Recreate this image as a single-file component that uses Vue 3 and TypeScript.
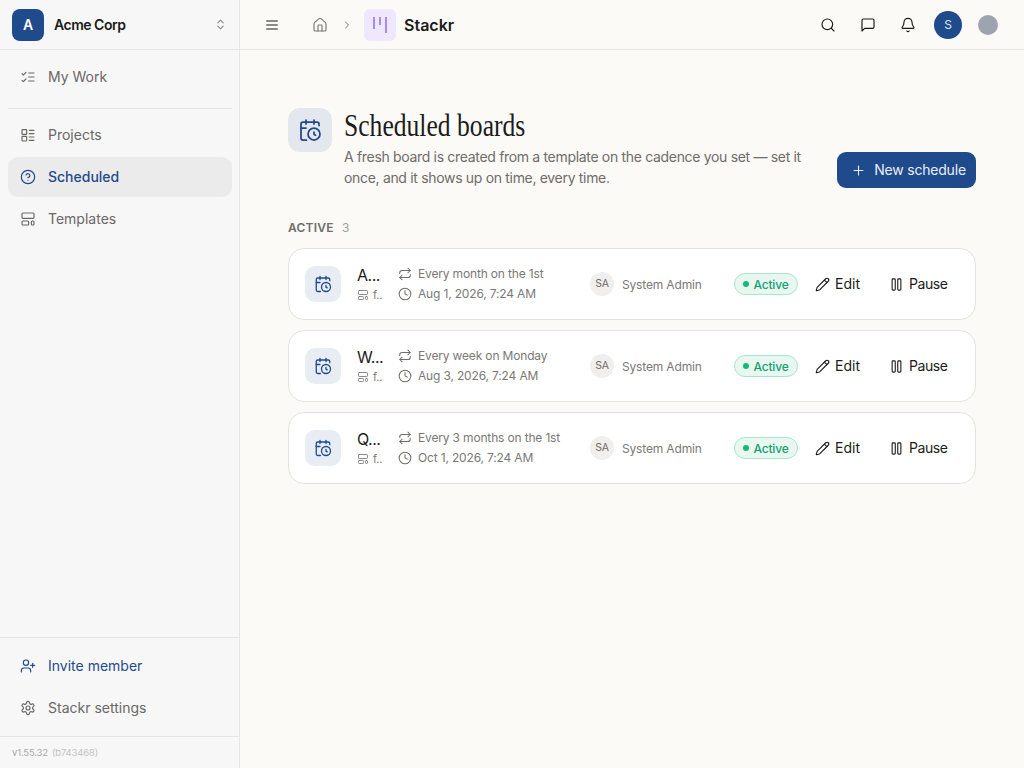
<template>
  <div class="app">
    <aside class="sidebar">
      <div class="org">
        <div class="org-logo">A</div>
        <span class="org-name">Acme Corp</span>
        <svg class="chev" viewBox="0 0 24 24"><path d="m7 15 5 5 5-5" /><path d="m7 9 5-5 5 5" /></svg>
      </div>
      <nav class="nav">
        <a class="nav-item">
          <svg viewBox="0 0 24 24"><path d="m3 17 2 2 4-4" /><path d="m3 7 2 2 4-4" /><path d="M13 6h8" /><path d="M13 12h8" /><path d="M13 18h8" /></svg>
          My Work
        </a>
        <div class="nav-sep"></div>
        <a class="nav-item">
          <svg viewBox="0 0 24 24"><rect x="3" y="4" width="7" height="7" rx="1" /><rect x="3" y="14" width="7" height="7" rx="1" /><path d="M14 5h7" /><path d="M14 10h7" /><path d="M14 15h7" /><path d="M14 20h7" /></svg>
          Projects
        </a>
        <a class="nav-item active">
          <svg viewBox="0 0 24 24"><circle cx="12" cy="12" r="10" /><path d="M9.1 9a3 3 0 0 1 5.8 1c0 2-3 3-3 3" /><path d="M12 17h.01" /></svg>
          Scheduled
        </a>
        <a class="nav-item">
          <svg viewBox="0 0 24 24"><rect x="3" y="3" width="18" height="8" rx="1.5" /><rect x="3" y="15" width="10" height="6" rx="1.5" /><rect x="17" y="15" width="4" height="6" rx="1.5" /></svg>
          Templates
        </a>
      </nav>
      <div class="side-bottom">
        <a class="nav-item invite">
          <svg viewBox="0 0 24 24"><path d="M16 21v-2a4 4 0 0 0-4-4H6a4 4 0 0 0-4 4v2" /><circle cx="9" cy="7" r="4" /><path d="M19 8v6" /><path d="M22 11h-6" /></svg>
          Invite member
        </a>
        <a class="nav-item">
          <svg viewBox="0 0 24 24"><path d="M12.2 2h-.4a2 2 0 0 0-2 2v.2a2 2 0 0 1-1 1.7l-.4.3a2 2 0 0 1-2 0l-.2-.1a2 2 0 0 0-2.7.7l-.2.4a2 2 0 0 0 .7 2.7l.2.1a2 2 0 0 1 1 1.7v.5a2 2 0 0 1-1 1.7l-.2.1a2 2 0 0 0-.7 2.7l.2.4a2 2 0 0 0 2.7.7l.2-.1a2 2 0 0 1 2 0l.4.3a2 2 0 0 1 1 1.7v.2a2 2 0 0 0 2 2h.4a2 2 0 0 0 2-2v-.2a2 2 0 0 1 1-1.7l.4-.3a2 2 0 0 1 2 0l.2.1a2 2 0 0 0 2.7-.7l.2-.4a2 2 0 0 0-.7-2.7l-.2-.1a2 2 0 0 1-1-1.7v-.5a2 2 0 0 1 1-1.7l.2-.1a2 2 0 0 0 .7-2.7l-.2-.4a2 2 0 0 0-2.7-.7l-.2.1a2 2 0 0 1-2 0l-.4-.3a2 2 0 0 1-1-1.7V4a2 2 0 0 0-2-2z" /><circle cx="12" cy="12" r="3" /></svg>
          Stackr settings
        </a>
      </div>
      <div class="version">v1.55.32 <span>(b743468)</span></div>
    </aside>

    <div class="main">
      <header class="topbar">
        <svg class="ic16 menu" viewBox="0 0 24 24"><path d="M4 6h16" /><path d="M4 12h16" /><path d="M4 18h16" /></svg>
        <svg class="ic16 home" viewBox="0 0 24 24"><path d="M15 21v-8a1 1 0 0 0-1-1h-4a1 1 0 0 0-1 1v8" /><path d="M3 10a2 2 0 0 1 .7-1.5l7-6a2 2 0 0 1 2.6 0l7 6A2 2 0 0 1 21 10v9a2 2 0 0 1-2 2H5a2 2 0 0 1-2-2z" /></svg>
        <svg class="ic12 crumb" viewBox="0 0 24 24"><path d="m9 18 6-6-6-6" /></svg>
        <div class="app-logo">
          <i class="b1"></i><i class="b2"></i><i class="b3"></i>
        </div>
        <span class="app-name">Stackr</span>
        <div class="top-actions">
          <svg class="ic16" viewBox="0 0 24 24"><circle cx="11" cy="11" r="8" /><path d="m21 21-4.3-4.3" /></svg>
          <svg class="ic16" viewBox="0 0 24 24"><path d="M21 15a2 2 0 0 1-2 2H7l-4 4V5a2 2 0 0 1 2-2h14a2 2 0 0 1 2 2z" /></svg>
          <svg class="ic16" viewBox="0 0 24 24"><path d="M10.3 21a2 2 0 0 0 3.4 0" /><path d="M3.3 15.3A1 1 0 0 0 4 17h16a1 1 0 0 0 .7-1.7C19.4 14 18 12.5 18 8A6 6 0 0 0 6 8c0 4.5-1.4 6-2.7 7.3" /></svg>
          <div class="user">S</div>
          <div class="dot-user"></div>
        </div>
      </header>

      <main class="content">
        <div class="page-head">
          <div class="head-icon">
            <svg viewBox="0 0 24 24"><path d="M16 14v2.200l1.600 1" /><path d="M16 2v4" /><path d="M21 7.500V6a2 2 0 0 0-2-2H5a2 2 0 0 0-2 2v14a2 2 0 0 0 2 2h3.500" /><path d="M3 10h5" /><path d="M8 2v4" /><circle cx="16" cy="16" r="6" /></svg>
          </div>
          <div class="head-text">
            <h1>Scheduled boards</h1>
            <p>A fresh board is created from a template on the cadence you set — set it once, and it shows up on time, every time.</p>
          </div>
          <button class="new-btn">
            <svg viewBox="0 0 24 24"><path d="M5 12h14" /><path d="M12 5v14" /></svg>
            New schedule
          </button>
        </div>

        <div class="section-label">ACTIVE <span>3</span></div>

        <div class="cards">
          <div v-for="s in schedules" :key="s.name" class="card">
            <div class="card-icon">
              <svg viewBox="0 0 24 24"><path d="M16 14v2.200l1.600 1" /><path d="M16 2v4" /><path d="M21 7.500V6a2 2 0 0 0-2-2H5a2 2 0 0 0-2 2v14a2 2 0 0 0 2 2h3.500" /><path d="M3 10h5" /><path d="M8 2v4" /><circle cx="16" cy="16" r="6" /></svg>
            </div>
            <div class="card-name">
              <div class="name">{{ s.name }}</div>
              <div class="tpl">
                <svg viewBox="0 0 24 24"><rect x="3" y="3" width="18" height="8" rx="1.500" /><rect x="3" y="15" width="10" height="6" rx="1.500" /><rect x="17" y="15" width="4" height="6" rx="1.500" /></svg>
                <span>f..</span>
              </div>
            </div>
            <div class="card-when">
              <div class="when-row">
                <svg viewBox="0 0 24 24"><path d="m17 2 4 4-4 4" /><path d="M3 11v-1a4 4 0 0 1 4-4h14" /><path d="m7 22-4-4 4-4" /><path d="M21 13v1a4 4 0 0 1-4 4H3" /></svg>
                {{ s.cadence }}
              </div>
              <div class="when-row">
                <svg viewBox="0 0 24 24"><circle cx="12" cy="12" r="10" /><path d="M12 6v6l4 2" /></svg>
                {{ s.next }}
              </div>
            </div>
            <div class="card-owner">
              <div class="owner-av">SA</div>
              System Admin
            </div>
            <div class="pill"><i></i>Active</div>
            <button class="act edit">
              <svg viewBox="0 0 24 24"><path d="M21.200 6.800a2.800 2.800 0 0 0-4-4L3.800 16.200a2 2 0 0 0-.5.800l-1.300 4.400a.5.5 0 0 0 .6.600l4.400-1.300a2 2 0 0 0 .8-.5z" /><path d="m15 5 4 4" /></svg>
              Edit
            </button>
            <button class="act pause">
              <svg viewBox="0 0 24 24"><rect x="5" y="3" width="5" height="18" rx="1.500" /><rect x="14" y="3" width="5" height="18" rx="1.500" /></svg>
              Pause
            </button>
          </div>
        </div>
      </main>
    </div>
  </div>
</template>

<script setup lang="ts">
interface Schedule {
  name: string;
  cadence: string;
  next: string;
}

const schedules: Schedule[] = [
  { name: 'A...', cadence: 'Every month on the 1st', next: 'Aug 1, 2026, 7:24 AM' },
  { name: 'W...', cadence: 'Every week on Monday', next: 'Aug 3, 2026, 7:24 AM' },
  { name: 'Q...', cadence: 'Every 3 months on the 1st', next: 'Oct 1, 2026, 7:24 AM' },
];
</script>

<style>
html, body { margin: 0; background: #fbfaf7; }
</style>

<style scoped>
.app { display: flex; width: 1024px; height: 768px; overflow: hidden; font-family: Inter, "Liberation Sans", sans-serif; letter-spacing: -0.01em; }
svg { fill: none; stroke: currentColor; stroke-width: 2; stroke-linecap: round; stroke-linejoin: round; flex: none; }

.sidebar { width: 240px; flex: none; box-sizing: border-box; background: #f7f7f7; border-right: 1px solid #e5e5e3; display: flex; flex-direction: column; }
.org { height: 50px; box-sizing: border-box; flex: none; border-bottom: 1px solid #e5e5e3; display: flex; align-items: center; padding: 0 10px 0 12px; }
.org-logo { width: 32px; height: 32px; border-radius: 8px; background: #1f4a8c; color: #fff; font-size: 14px; font-weight: 600; display: flex; align-items: center; justify-content: center; }
.org-name { margin-left: 10px; font-size: 14px; font-weight: 600; color: #1c1b1a; letter-spacing: -0.035em; flex: 1; }
.chev { width: 13px; height: 13px; color: #8a8886; margin-right: 2px; }

.nav { padding: 7px 7px 8px 8px; display: flex; flex-direction: column; gap: 2px; }
.nav-sep { height: 1px; background: #e5e5e3; margin: 9px 0 4px; }
.nav-item { height: 40px; box-sizing: border-box; padding: 0 12px 2px; display: flex; align-items: center; gap: 12px; border-radius: 10px; font-size: 14px; letter-spacing: 0; color: #6a6866; }
.nav-item svg { width: 16px; height: 16px; stroke-width: 1.750; margin-top: 2px; }
.nav-item.active { background: #ebebeb; color: #1f4a8c; font-weight: 500; }
.nav-item.invite { color: #1f4a8c; }

.side-bottom { margin-top: auto; border-top: 1px solid #e5e5e3; padding: 8px 7px 8px 8px; display: flex; flex-direction: column; gap: 2px; }
.version { height: 31px; flex: none; border-top: 1px solid #e5e5e3; padding: 0 12px; display: flex; align-items: center; gap: 4px; font-size: 9.500px; color: #aaa8a6; }
.version span { color: #c4c2c0; }

.main { flex: 1; min-width: 0; display: flex; flex-direction: column; }
.topbar { height: 50px; flex: none; box-sizing: border-box; border-bottom: 1px solid #e8e7e3; display: flex; align-items: center; padding: 0 26px 0 24px; color: #1c1b1a; }
.ic16 { width: 16px; height: 16px; stroke-width: 1.750; }
.ic12 { width: 12px; height: 12px; }
.menu { margin-right: 32px; }
.home { color: #7a7876; margin-right: 13px; }
.crumb { color: #7a7876; margin-right: 11px; }
.app-logo { width: 32px; height: 32px; border-radius: 6px; background: #efe7fc; display: flex; justify-content: center; gap: 4px; padding-top: 8px; box-sizing: border-box; }
.app-logo i { width: 2px; background: #a98bf0; display: block; }
.b1 { height: 12px; }
.b2 { height: 8px; }
.b3 { height: 16px; }
.app-name { margin-left: 8px; font-size: 16px; font-weight: 600; letter-spacing: 0; color: #1c1b1a; }
.top-actions { margin-left: auto; display: flex; align-items: center; gap: 24px; }
.user { width: 28px; height: 28px; border-radius: 50%; background: #1f4a8c; color: #dfe7f3; font-size: 12px; display: flex; align-items: center; justify-content: center; margin-left: -6px; }
.dot-user { width: 20px; height: 20px; border-radius: 50%; background: #9ea3b0; margin-left: -8px; }

.content { padding: 58px 48px 0; }
.page-head { display: flex; align-items: flex-start; }
.head-icon { width: 44px; height: 44px; border-radius: 12px; background: #e4e8ee; color: #1f4a8c; display: flex; align-items: center; justify-content: center; flex: none; }
.head-icon svg { width: 24px; height: 24px; stroke-width: 1.750; }
.head-text { margin-left: 12px; width: 470px; }
h1 { margin: 0; font-family: "Liberation Serif", serif; font-weight: 400; font-size: 32px; line-height: 34px; letter-spacing: 0; color: #1c1b1a; transform: scaleX(0.8); transform-origin: left center; white-space: nowrap; }
p { margin: 4px 0 0; font-size: 14px; line-height: 21px; letter-spacing: -0.32px; color: #6f6c69; }
.new-btn { margin-left: auto; margin-top: 44px; height: 36px; width: 139px; border: 0; border-radius: 9px; background: #1f4a8c; color: #e9eef6; font: inherit; font-size: 14px; letter-spacing: -0.2px; display: flex; align-items: center; justify-content: center; gap: 8px; padding: 0 0 2px; }
.new-btn svg { width: 15px; height: 15px; stroke-width: 1.750; margin-top: 2px; margin-left: 4px; }

.section-label { margin-top: 32px; font-size: 12px; font-weight: 600; letter-spacing: 0.02em; color: #6f6c69; line-height: 16px; }
.section-label span { margin-left: 5px; color: #a09e9b; font-weight: 400; }

.cards { margin-top: 12px; display: flex; flex-direction: column; gap: 10px; }
.card { height: 72px; box-sizing: border-box; background: #fff; border: 1px solid #e5e3df; border-radius: 16px; display: flex; align-items: center; padding: 0 16px; }
.card-icon { width: 36px; height: 36px; border-radius: 10px; background: #e8edf4; color: #1f4a8c; display: flex; align-items: center; justify-content: center; flex: none; }
.card-icon svg { width: 18px; height: 18px; stroke-width: 1.750; }
.card-name { width: 26px; margin-left: 16px; overflow: hidden; flex: none; }
.name { font-size: 16px; line-height: 20px; letter-spacing: -0.03em; color: #1c1b1a; white-space: nowrap; }
.tpl { display: flex; align-items: center; gap: 4px; font-size: 11px; line-height: 16px; color: #7a7876; margin-top: 2px; }
.tpl svg { width: 12px; height: 12px; stroke-width: 1.750; }
.card-when { margin-left: 15px; width: 192px; flex: none; }
.when-row { display: flex; align-items: center; gap: 6px; font-size: 12px; line-height: 20px; color: #7a7876; white-space: nowrap; }
.when-row svg { width: 14px; height: 14px; stroke-width: 1.750; color: #6f6c69; }
.card-owner { width: 144px; flex: none; display: flex; align-items: center; gap: 8px; font-size: 12px; color: #7a7876; }
.owner-av { width: 24px; height: 24px; border-radius: 50%; background: #f1efec; color: #6f6c69; font-size: 10.500px; padding-bottom: 2px; box-sizing: border-box; display: flex; align-items: center; justify-content: center; }
.pill { width: 64px; height: 22px; box-sizing: border-box; border: 1px solid #a8e6cf; background: #e8f8f1; border-radius: 11px; color: #12a071; font-size: 12px; font-weight: 500; display: flex; align-items: center; justify-content: center; gap: 4px; flex: none; }
.pill i { width: 6px; height: 6px; border-radius: 50%; background: #12b981; }
.act { border: 0; background: none; font: inherit; font-size: 14px; color: #1c1b1a; display: flex; align-items: center; gap: 5px; padding: 0 0 2px; flex: none; }
.act svg { width: 15px; height: 15px; stroke-width: 1.750; margin-top: 2px; }
.edit { margin-left: 17px; width: 74px; }
.pause { width: 60px; letter-spacing: -0.03em; }
</style>
